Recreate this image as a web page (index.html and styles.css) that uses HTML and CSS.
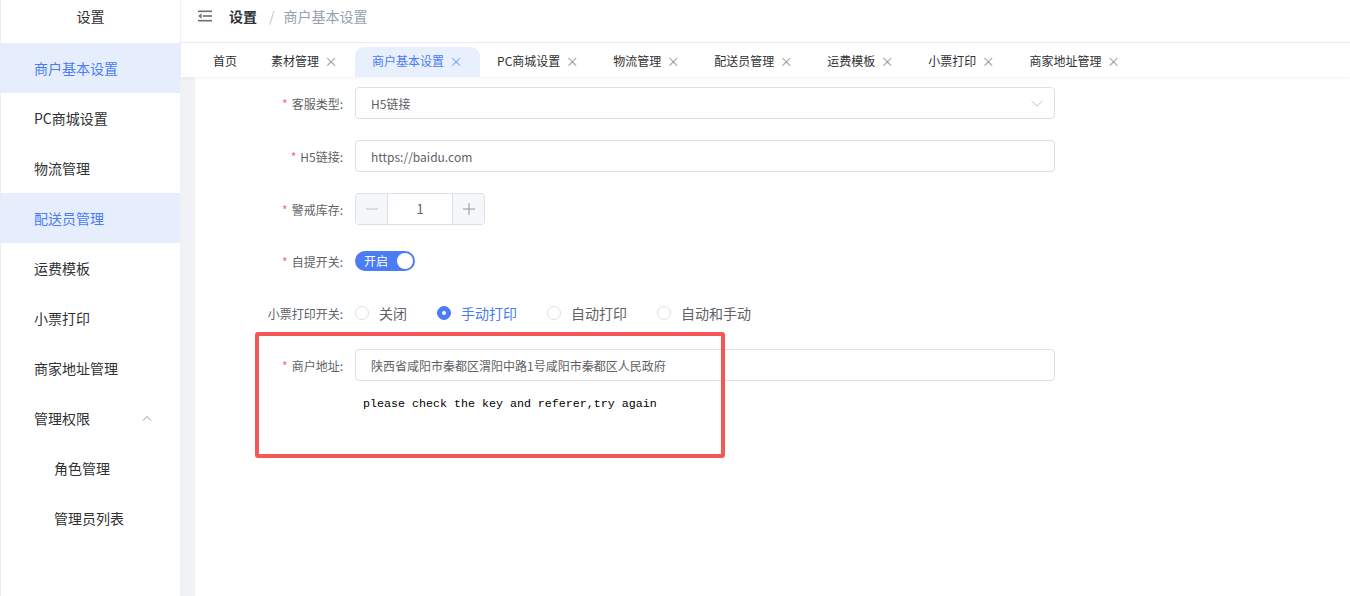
FILE: index.html
```html
<!DOCTYPE html>
<html lang="zh-CN">
<head>
<meta charset="utf-8">
<title>商户基本设置</title>
<link rel="stylesheet" href="styles.css">
</head>
<body>
<div class="app">
  <aside class="sidebar">
    <div class="side-title">设置</div>
    <ul class="menu">
      <li class="menu-item active">商户基本设置</li>
      <li class="menu-item">PC商城设置</li>
      <li class="menu-item">物流管理</li>
      <li class="menu-item hover">配送员管理</li>
      <li class="menu-item">运费模板</li>
      <li class="menu-item">小票打印</li>
      <li class="menu-item">商家地址管理</li>
      <li class="menu-item submenu-title">
        <span>管理权限</span>
        <svg class="chev-up" width="10" height="6" viewBox="0 0 10 6"><path d="M1 5.5 L5 1.5 L9 5.5" fill="none" stroke="#909399" stroke-width="1"/></svg>
      </li>
      <li class="menu-item sub">角色管理</li>
      <li class="menu-item sub">管理员列表</li>
    </ul>
  </aside>
  <main class="main">
    <header class="topbar">
      <svg class="fold" width="14" height="12" viewBox="0 0 14 12">
        <rect x="0" y="0.5" width="14" height="1.6" fill="#6b6f78"/>
        <rect x="5" y="5.2" width="9" height="1.6" fill="#6b6f78"/>
        <path d="M0 6 L3.6 3.6 L3.6 8.4 Z" fill="#6b6f78"/>
        <rect x="0" y="9.9" width="14" height="1.6" fill="#6b6f78"/>
      </svg>
      <span class="crumb-main">设置</span>
      <span class="crumb-sep">/</span>
      <span class="crumb-sub">商户基本设置</span>
    </header>
    <nav class="tabs">
      <div class="tab">首页</div>
      <div class="tab">素材管理<span class="close">×</span></div>
      <div class="tab active">商户基本设置<span class="close">×</span></div>
      <div class="tab">PC商城设置<span class="close">×</span></div>
      <div class="tab">物流管理<span class="close">×</span></div>
      <div class="tab">配送员管理<span class="close">×</span></div>
      <div class="tab">运费模板<span class="close">×</span></div>
      <div class="tab">小票打印<span class="close">×</span></div>
      <div class="tab">商家地址管理<span class="close">×</span></div>
    </nav>
    <section class="content">
      <div class="panel">
        <form class="form">
          <div class="form-item gap21">
            <label class="label"><span class="req">*</span>客服类型:</label>
            <div class="select">
              <span>H5链接</span>
              <svg width="12" height="7" viewBox="0 0 12 7"><path d="M0.5 0.8 L6 6 L11.5 0.8" fill="none" stroke="#c0c4cc" stroke-width="1"/></svg>
            </div>
          </div>
          <div class="form-item gap21">
            <label class="label"><span class="req">*</span>H5链接:</label>
            <div class="input">https://baidu.com</div>
          </div>
          <div class="form-item">
            <label class="label"><span class="req">*</span>警戒库存:</label>
            <div class="number">
              <span class="num-btn minus"><svg width="12" height="2" viewBox="0 0 12 2"><rect width="12" height="1" y="0.5" fill="#c0c4cc"/></svg></span>
              <span class="num-val">1</span>
              <span class="num-btn plus"><svg width="12" height="12" viewBox="0 0 12 12"><rect width="12" height="1" y="5.5" fill="#909399"/><rect width="1" height="12" x="5.5" fill="#909399"/></svg></span>
            </div>
          </div>
          <div class="form-item">
            <label class="label"><span class="req">*</span>自提开关:</label>
            <div class="switch"><span class="switch-text">开启</span><span class="knob"></span></div>
          </div>
          <div class="form-item">
            <label class="label">小票打印开关:</label>
            <div class="radios">
              <span class="radio"><span class="dot"></span>关闭</span>
              <span class="radio checked"><span class="dot"></span>手动打印</span>
              <span class="radio"><span class="dot"></span>自动打印</span>
              <span class="radio"><span class="dot"></span>自动和手动</span>
            </div>
          </div>
          <div class="form-item">
            <label class="label"><span class="req">*</span>商户地址:</label>
            <div class="input">陕西省咸阳市秦都区渭阳中路1号咸阳市秦都区人民政府</div>
          </div>
          <div class="map-error">please check the key and referer,try again</div>
        </form>
        <div class="highlight"></div>
      </div>
    </section>
  </main>
</div>
</body>
</html>
```

FILE: styles.css
```css
* { box-sizing: border-box; margin: 0; padding: 0; }
html, body { width: 1350px; height: 596px; overflow: hidden; }
body {
  font-family: "Noto Sans CJK SC", "Noto Sans", sans-serif;
  color: #303133;
  background: #fff;
}
.app { display: flex; height: 596px; }

.sidebar {
  width: 181px;
  flex: 0 0 181px;
  background: #fff;
  border-left: 1px solid #e7ecf6;
  border-right: 1px solid #eef0f5;
}
.side-title {
  height: 43px;
  line-height: 33px;
  text-align: center;
  font-size: 14px;
  color: #303133;
}
.menu { list-style: none; }
.menu-item {
  height: 50px;
  line-height: 50px;
  padding-left: 33px;
  font-size: 14px;
  color: #303133;
}
.menu-item.active, .menu-item.hover { background: #e6eefd; color: #4b7bf5; }
.submenu-title { display: flex; justify-content: space-between; align-items: center; padding-right: 28px; }
.menu-item.sub { padding-left: 53px; }

.main { flex: 1; display: flex; flex-direction: column; min-width: 0; }
.topbar {
  height: 43px;
  border-bottom: 1px solid #e8eaf2;
  display: flex;
  align-items: center;
  padding-left: 17px;
  padding-bottom: 10px;
  font-size: 14px;
}
.fold { margin-right: 17px; }
.crumb-main { font-weight: 700; color: #303133; }
.crumb-sep { color: #c0c4cc; margin: 0 9px 0 12px; }
.crumb-sub { color: #97a0ad; }

.tabs {
  height: 34px;
  display: flex;
  align-items: flex-end;
  padding-left: 15px;
  background: #fff;
  box-shadow: 0 2px 3px rgba(0, 0, 0, 0.03);
  position: relative;
  z-index: 1;
}
.tab {
  height: 30px;
  padding: 0 17px 3px;
  font-size: 12px;
  color: #303133;
  display: flex;
  align-items: center;
  white-space: nowrap;
}
.tab.active {
  background: #e8f0fe;
  color: #4b7bf5;
  border-radius: 9px 9px 0 0;
}
.close {
  width: 14px;
  margin-left: 5px;
  text-align: center;
  color: #909399;
  font-size: 13px;
}
.tab.active .close { color: #7a9cf5; }

.content {
  flex: 1;
  background: #f0f2f6;
  padding-left: 14px;
  display: flex;
}
.panel { flex: 1; background: #fff; position: relative; }
.form { padding: 10px 0 0 60px; }
.form-item {
  display: flex;
  align-items: center;
  min-height: 32px;
  margin-bottom: 20px;
}
.form-item.gap21 { margin-bottom: 21px; }
.label {
  width: 100px;
  flex: 0 0 100px;
  text-align: right;
  padding-right: 12px;
  font-size: 12px;
  color: #606266;
}
.req { color: #f56c6c; margin-right: 4px; }

.select, .input {
  width: 700px;
  height: 32px;
  border: 1px solid #dcdfe6;
  border-radius: 4px;
  padding: 0 11px 0 15px;
  display: flex;
  align-items: center;
  font-size: 12px;
  color: #606266;
}
.select { justify-content: space-between; }

.number {
  width: 130px;
  height: 32px;
  border: 1px solid #dcdfe6;
  border-radius: 4px;
  display: flex;
  overflow: hidden;
}
.num-btn {
  width: 32px;
  background: #f5f7fa;
  display: flex;
  align-items: center;
  justify-content: center;
}
.minus { border-right: 1px solid #dcdfe6; }
.plus { border-left: 1px solid #dcdfe6; }
.num-val { flex: 1; text-align: center; line-height: 30px; font-size: 13px; color: #606266; }

.switch {
  width: 60px;
  height: 20px;
  border-radius: 10px;
  background: #4b7bf5;
  display: flex;
  align-items: center;
  justify-content: space-between;
  padding: 0 2px 0 9px;
}
.switch-text { color: #fff; font-size: 12px; line-height: 20px; }
.knob { width: 16px; height: 16px; border-radius: 50%; background: #fff; }

.radios { display: flex; align-items: center; }
.radio {
  display: flex;
  align-items: center;
  margin-right: 30px;
  font-size: 14px;
  color: #606266;
}
.dot {
  width: 14px;
  height: 14px;
  border: 1px solid #dcdfe6;
  border-radius: 50%;
  margin-right: 10px;
  background: #fff;
  display: flex;
  align-items: center;
  justify-content: center;
}
.radio.checked { color: #4b7bf5; }
.radio.checked .dot { background: #4b7bf5; border-color: #4b7bf5; }
.radio.checked .dot::after {
  content: "";
  width: 4px;
  height: 4px;
  border-radius: 50%;
  background: #fff;
}

.map-error {
  margin: -5px 0 0 108px;
  font-family: "Liberation Mono", monospace;
  font-size: 11.67px;
  line-height: 16px;
  color: #000;
}

.highlight {
  position: absolute;
  left: 60px;
  top: 255px;
  width: 470px;
  height: 126px;
  border: 4px solid #f55656;
  border-radius: 3px;
  pointer-events: none;
}
```
